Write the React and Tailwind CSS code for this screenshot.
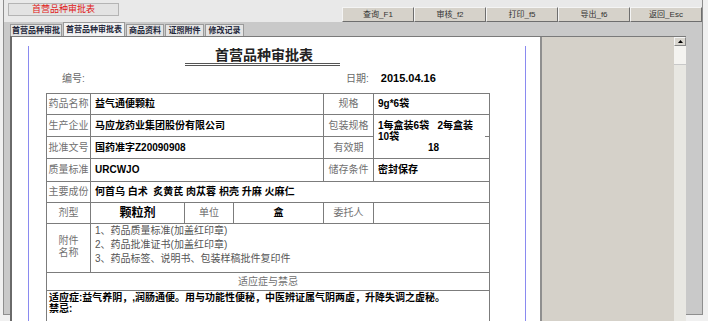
import React from "react";

const buttons = ["查询_F1", "审核_f2", "打印_f5", "导出_f6", "返回_Esc"];

const tabs = [
  { label: "首营品种审批", w: "w-[52px]" },
  { label: "首营品种审批表", w: "w-[62px]", active: true },
  { label: "商品资料", w: "w-[38px]" },
  { label: "证照附件", w: "w-[39px]" },
  { label: "修改记录", w: "w-[39px]" },
];

// 表格单元格的基础样式
const cell = "border border-[#7c7c7c] p-0 align-middle";
const label = `${cell} text-center text-[#707070] font-normal`;
const value = `${cell} pl-[4px] text-black font-bold`;

export default function App() {
  return (
    <div
      className="w-[708px] h-[321px] bg-[#f0f0f0] pl-[3px] overflow-hidden text-[10px]"
      style={{ fontFamily: '"Liberation Sans", "Noto Sans CJK SC", sans-serif' }}
    >
      <div className="w-[700px] h-[315px] border-x border-b border-[#8e8e8e] flex flex-col bg-[#c9c9c9]">
        {/* 顶部：标题 + 按钮 */}
        <div className="h-[25px] bg-[#e9e9e9] flex items-start">
          <div className="ml-[4px] mt-[3px] w-[111px] h-[13px] border border-[#b4b4b4] bg-[#e3e3e3] flex items-center justify-center text-[9px] text-[#e01818] leading-none">
            首营品种审批表
          </div>
          <div className="ml-auto mt-[7px] flex">
            {buttons.map((b) => (
              <div
                key={b}
                className="w-[72px] h-[15px] bg-[#d6d2ca] border border-t-[#f4f4f4] border-l-[#f4f4f4] border-r-[#6e6e6e] border-b-[#6e6e6e] flex items-center justify-center text-[8px] text-[#333] leading-none"
              >
                {b}
              </div>
            ))}
          </div>
        </div>

        {/* 标签页 */}
        <div className="h-[15px] flex items-end pl-[6px]">
          {tabs.map((t) => (
            <div
              key={t.label}
              className={`${t.w} ${
                t.active ? "h-[14px] bg-[#f2f2f2]" : "h-[12px] bg-[#e4e4e4]"
              } mr-[1px] border border-b-0 border-[#9a9a9a] flex items-center justify-center text-[8px] font-bold text-[#22263a] leading-none`}
            >
              {t.label}
            </div>
          ))}
        </div>

        {/* 主体 */}
        <div className="flex-1 flex pl-[6px] pr-[16px] pb-[3px]">
          <div className="flex-1 flex border-t border-b border-l-2 border-t-[#7a7a7a] border-b-[#7a7a7a] border-l-[#6a6a6a] overflow-hidden">
            {/* 报表页面 */}
            <div className="w-[530px] h-full bg-white border-r-2 border-[#8f8f8f] overflow-hidden">
              <div className="ml-[16px] w-[498px] h-full border-x border-[#8a8af0]">
                <div className="ml-[156px] mt-[9px] w-[155px] border-b-[3px] border-double border-[#555] pb-[1px]">
                  <div
                    className="ml-[30px] text-[14px] leading-[16px] font-bold text-[#222]"
                    style={{ fontFamily: '"Noto Sans CJK SC", sans-serif' }}
                  >
                    首营品种审批表
                  </div>
                </div>
                <div className="flex mt-[5px] h-[14px] items-center">
                  <div className="ml-[33px] w-[284px] text-[#6a6a6a]">编号:</div>
                  <div className="text-[#6a6a6a]">日期:</div>
                  <div className="ml-[12px] font-bold text-[11px] text-black">2015.04.16</div>
                </div>
                <table className="ml-[17px] mt-[8px] w-[443px] table-fixed border-collapse leading-[12px]">
                  <colgroup>
                    <col className="w-[44px]" />
                    <col className="w-[94px]" />
                    <col className="w-[49px]" />
                    <col className="w-[90px]" />
                    <col className="w-[50px]" />
                    <col className="w-[116px]" />
                  </colgroup>
                  <tbody>
                    <tr className="h-[21px]">
                      <td className={label}>药品名称</td>
                      <td className={value} colSpan={3}>益气通便颗粒</td>
                      <td className={label}>规格</td>
                      <td className={value}>9g*6袋</td>
                    </tr>
                    <tr className="h-[22px]">
                      <td className={label}>生产企业</td>
                      <td className={value} colSpan={3}>马应龙药业集团股份有限公司</td>
                      <td className={label}>包装规格</td>
                      <td className={`${value} relative align-top`} rowSpan={2}>
                        <div className="pt-[5px] leading-[11px] pr-[6px]">1每盒装6袋&nbsp;&nbsp;&nbsp;2每盒装10袋</div>
                        <div className="text-center leading-[11px]">18</div>
                        <div className="absolute right-0 top-[21px] w-[4px] h-px bg-[#7c7c7c]" />
                      </td>
                    </tr>
                    <tr className="h-[22px]">
                      <td className={label}>批准文号</td>
                      <td className={value} colSpan={3}>国药准字Z20090908</td>
                      <td className={label}>有效期</td>
                    </tr>
                    <tr className="h-[23px]">
                      <td className={label}>质量标准</td>
                      <td className={value} colSpan={3}>URCWJO</td>
                      <td className={label}>储存条件</td>
                      <td className={value}>密封保存</td>
                    </tr>
                    <tr className="h-[21px]">
                      <td className={label}>主要成份</td>
                      <td className={value} colSpan={5}>
                        何首乌&nbsp;白术&nbsp;&nbsp;炙黄芪&nbsp;肉苁蓉&nbsp;枳壳&nbsp;升麻&nbsp;火麻仁
                      </td>
                    </tr>
                    <tr className="h-[21px]">
                      <td className={label}>剂型</td>
                      <td className={`${cell} text-center font-bold text-[12px] text-black`}>颗粒剂</td>
                      <td className={label}>单位</td>
                      <td className={`${cell} text-center font-bold text-black`}>盒</td>
                      <td className={label}>委托人</td>
                      <td className={cell}></td>
                    </tr>
                    <tr className="h-[49px]">
                      <td className={label}>
                        <div className="leading-[12px] -mt-[3px]">
                          附件
                          <br />
                          名称
                        </div>
                      </td>
                      <td className={`${cell} align-top pl-[4px] text-[#555] leading-[14px]`} colSpan={5}>
                        <div>1、药品质量标准(加盖红印章)</div>
                        <div>2、药品批准证书(加盖红印章)</div>
                        <div>3、药品标签、说明书、包装样稿批件复印件</div>
                      </td>
                    </tr>
                    <tr className="h-[18px]">
                      <td className={label} colSpan={6}>适应症与禁忌</td>
                    </tr>
                    <tr>
                      <td className={`${cell} align-top pl-[2px] font-bold text-black leading-[11px] pt-[1px] h-[40px]`} colSpan={6}>
                        <div>适应症:益气养阴，,润肠通便。用与功能性便秘，中医辨证属气阴两虚，升降失调之虚秘。</div>
                        <div>禁忌:</div>
                      </td>
                    </tr>
                  </tbody>
                </table>
              </div>
            </div>

            {/* 右侧灰色区域 */}
            <div className="flex-1 bg-[#d5d1c9]" />

            {/* 滚动条 */}
            <div className="w-[12px] flex flex-col bg-[#e9e8e4]">
              <div className="h-[9px] bg-[#d9d6cf] border border-t-[#f5f5f5] border-l-[#f5f5f5] border-r-[#888] border-b-[#888] flex items-center justify-center">
                <svg width="5" height="3" viewBox="0 0 5 3">
                  <path d="M0 3 L2.5 0 L5 3 Z" fill="#000" />
                </svg>
              </div>
              <div className="h-[19px] bg-[#f4f3f0] border-b border-[#c8c8c8]" />
              <div className="flex-1 bg-[#e8e7e2]" />
            </div>
          </div>
        </div>
      </div>
    </div>
  );
}
